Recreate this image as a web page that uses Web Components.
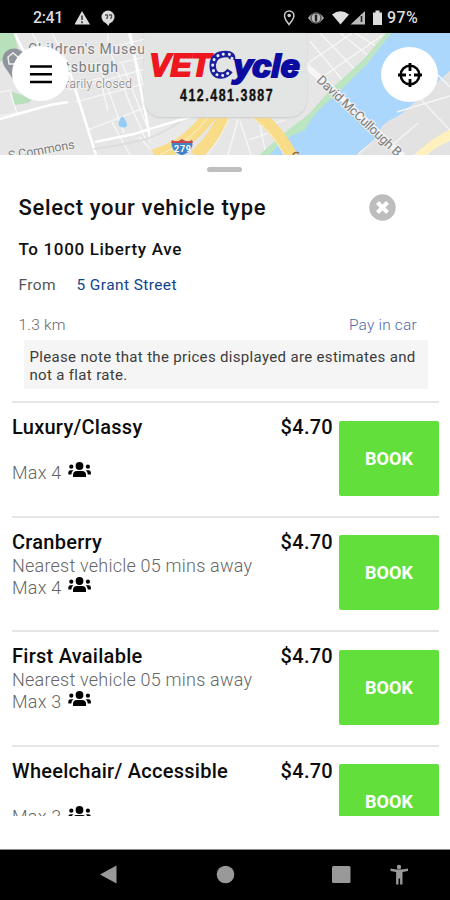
<!DOCTYPE html>
<html lang="en">
<head>
<meta charset="utf-8">
<title>VETCycle</title>
<style>
html,body{margin:0;height:100%;background:#fff}
body{font-family:Roboto,"Liberation Sans",sans-serif;overflow:hidden}
</style>
</head>
<body>
<ride-app></ride-app>
<script>
const define=(name,html)=>customElements.define(name,class extends HTMLElement{
  constructor(){super();this.attachShadow({mode:'open'}).innerHTML=html}
});

define('status-bar',`<style>
:host{display:flex;height:33px;background:#000;color:#ddd;box-sizing:border-box;padding:2px 31px 0 33px;align-items:center;justify-content:space-between;font:500 16px Roboto,sans-serif}
div{display:flex;align-items:center}
svg{display:block}
.t{letter-spacing:-.4px;width:42px}
.p{letter-spacing:.4px;width:32px}
</style>
<div><span class="t">2:41</span>
<svg width="42" height="18" viewBox="0 0 42 18"><path d="M7 2L15 15.500H-.5Z" fill="#ddd"/><path d="M7 6.500v4.500M7 12.300v2" stroke="#333" stroke-width="1.500"/><circle cx="33" cy="8" r="6.500" fill="#ddd"/><path d="M30 13l3.500 4 2-5z" fill="#ddd"/><path d="M30 6h2.500v2.200l-1 1.700M34 6h2.500v2.200l-1 1.700" fill="none" stroke="#555" stroke-width="1.400"/></svg></div>
<div>
<svg width="104" height="18" viewBox="0 0 104 18"><path d="M6 15.500C3.500 12.300 1.500 9.500 1.500 6.700a4.700 4.700 0 0 1 9.400 0C10.900 9.500 8.500 12.500 6 15.500Z" fill="none" stroke="#ccc" stroke-width="1.500"/><circle cx="6.200" cy="6.500" r="1.800" fill="#ccc"/><path d="M25 9q8-11 16 0q-8 11-16 0Z" fill="#aaa"/><circle cx="33" cy="9" r="5" fill="#bbb" stroke="#333"/><rect x="31.800" y="5.500" width="2.400" height="7" rx="1" fill="#222"/><path d="M49 5.500q8.500-6.500 17 0L57.500 15.500Z" fill="#e0e0e0"/><path d="M67.500 15.500L82 2v13.500Z" fill="#bbb"/><path d="M78.500 7v6" stroke="#222" stroke-width="1.600"/><path d="M90 3.500h2.500v-2h4v2H99v12.500h-9Z" fill="#ddd"/></svg>
<span class="p">97%</span></div>`);

define('city-map',`<style>
:host{display:block;height:122px;overflow:hidden;background:#e6e6e6}
svg{display:block}
text{font-family:Roboto,sans-serif}
</style>
<svg width="450" height="122" viewBox="0 33 450 122">
<rect y="33" width="450" height="122" fill="#e6e6e6"/>
<path d="M0 33H14L18 49 0 62ZM12 92L34 98 28 103 14 105Z" fill="#b8e0bb"/>
<g fill="none" stroke="#fff" stroke-width="1.200" opacity=".75">
<path d="M32 33L48 60M52 33L66 60M0 116L42 108M108 33V46L130 104L146 140M86 82L100 78 108 111M98 62L124 133M122 63L146 124M128 33L145 90M68 90L132 73M75 102L144 84M88 130L144 108M112 47L145 39M119 63L145 57M122 75L147 69M0 92L12 90M10 92L18 116M112 122L130 155M139 137L156 155M228 155L238 119M251 155L240 121M266 155L258 115M262 127L285 120M249 140L274 131M310 155L326 137L316 119M305 120L314 155M316 138L354 125M335 144L370 120"/>
<path d="M305 65L352 33M315 82L383 35M333 91L371 58M310 41L349 88M320 33L365 80M340 33L384 68M355 33L395 58M384 140L450 90M389 147L450 115M417 92L450 129M433 80L450 99M359 153L395 125M402 155L430 125"/></g>
<path d="M15 34L22 48 47 80M66 60L96 155M130 33L153 153M0 119L50 105 68 102M95 142L134 134 193 116" fill="none" stroke="#fff" stroke-width="2.500"/>
<path d="M150 130L198 117H218L174 155H150Z" fill="#e9e9e9"/>
<path d="M180 122Q158 136 143 140 118 146 94 149" stroke="#ddd" stroke-width="2" fill="none"/>
<path d="M391 33H450V71L418 99Q407 110 397 117 381 122 377 137L356 155H264L294 132 307 120 336 92 366 65Z" fill="#aad7fb"/>
<path d="M386 33H391L366 65 337 94Q313 113 305 130L285 139 269 155H259L288 130 309 114 330 90 363 60Z" fill="#bce5c1"/>
<path d="M377 137Q382 121 397 118L450 72V155H359Z" fill="#e2e2e2"/>
<path d="M409 87L450 130M397 112L450 96M389 148L418 123M438 75L450 87" stroke="#f5f5f5" stroke-width="1.500"/>
<path d="M414 155Q436 135 450 130V141Q437 146 427 155Z" fill="#fff1bd"/>
<g fill="none" stroke="#f9dc88"><path d="M154 156Q180 148 198 129L212 113" stroke-width="13"/><path d="M195 156Q215 138 224 115" stroke-width="12"/><path d="M255 112Q278 130 293 158" stroke-width="12"/></g>
<path d="M160 155Q194 139 208 117M207 155Q223 135 229 117M250 116Q272 130 284 155" stroke="#fff" stroke-width="1" fill="none" opacity=".6"/>
<path d="M305 65L326 83 403 156" stroke="#f7f7f7" stroke-width="6" fill="none"/>
<path d="M122 116q-5 7-3 10 5 3 8 0 0-5-5-10Z" fill="#91cdf5"/>
<circle cx="14" cy="60" r="11.500" fill="#90959d"/><path d="M5 67L14 81 18 69Z" fill="#90959d"/>
<path d="M8 57l5-4 5 4v7H9z" fill="none" stroke="#eee" stroke-width="1.500"/>
<g fill="#7c7c7c" stroke="#f0f0f0" stroke-width="2" paint-order="stroke">
<text x="28" y="54" font-size="14" textLength="117">Children's Museu</text>
<text x="27" y="72" font-size="14" textLength="91">of Pittsburgh</text>
<text x="27" y="88" font-size="12" font-weight="300" textLength="105">Temporarily closed</text>
<text x="9" y="160" font-size="12.500" textLength="67" transform="rotate(-10 9 160)">S Commons</text>
<text x="316" y="81" font-size="13" textLength="111" transform="rotate(43.500 316 81)">David McCullough B</text>
</g>
<path d="M293 158q-1-7 6-5" fill="none" stroke="#8d6750" stroke-width="1.500"/>
<path d="M172 140q5 3 10-1 5 4 10 1 4 10-10 16-14-6-10-16Z" fill="#4183c4" stroke="#eee" stroke-width=".7"/>
<path d="M172 140q5 3 10-1 5 4 10 1l1 3H171Z" fill="#cd4444"/>
<text x="182.500" y="151.500" font-size="9" font-weight="700" fill="#fff" text-anchor="middle" textLength="17">279</text>
</svg>`);

define('brand-badge',`<style>
:host{display:block;width:163px;height:84px;border-radius:0 0 18px 18px;background:#e2e5e4;box-shadow:0 1px 2px #ccc}
svg{display:block}
text{font-family:"Liberation Sans",Arial,sans-serif;font-weight:700}
</style>
<svg width="163" height="84" viewBox="144 33 163 84">
<text transform="translate(149.500 76.300)" font-size="31" font-style="italic" fill="#ee171f" stroke="#ee171f" stroke-width="2" textLength="61" lengthAdjust="spacingAndGlyphs">VET</text>
<path d="M232 59.500Q233 54 226 54 214 54 212.800 64 212 75.500 221 75.500 226.500 75.500 230 70.500" fill="none" stroke="#1a1f9c" stroke-width="6.500"/>
<path d="M232 58.500Q233 54 226 54 214 54 212.800 64 212 75.500 221 75.500 226.500 75.500 229 72" fill="none" stroke="#e8ebfa" stroke-width="3" stroke-linecap="round" stroke-dasharray=".1 5.500"/>
<text transform="translate(233.500 76.500)" font-size="32" font-style="italic" fill="#0c0ca0" stroke="#0c0ca0" stroke-width="2.200" textLength="66" lengthAdjust="spacingAndGlyphs">ycle</text>
<text transform="translate(180 101) scale(.73 1)" font-size="17" fill="#111" stroke="#111" stroke-width=".4" textLength="127">412.481.3887</text>
</svg>`);

define('round-button',`<style>
:host{display:grid;place-items:center;width:57px;height:55px;border-radius:50%;background:#fff}
::slotted(svg){display:block}
</style><slot></slot>`);

define('map-header',`<style>
:host{display:block;position:relative;height:122px}
round-button,brand-badge{position:absolute}
.menu{left:12px;top:13px}.aim{left:381px;top:14px}brand-badge{left:144px;top:0}
</style><city-map></city-map><brand-badge></brand-badge>
<round-button class="menu"><svg width="22" height="20"><path d="M0 2.500H22M0 10.200H22M0 18H22" stroke="#000" stroke-width="2.600"/></svg></round-button>
<round-button class="aim"><svg width="26" height="26" viewBox="0 0 26 26"><circle cx="13" cy="13" r="9.300" fill="none" stroke="#000" stroke-width="2.500"/><path d="M13 1v8M13 17v8M1 13h8M17 13h8" stroke="#000" stroke-width="2.800"/><circle cx="13" cy="13" r="1.100"/></svg></round-button>`);

define('trip-summary',`<style>
:host{display:block;height:246px;box-sizing:border-box;padding:12px 19px 0 18.500px;color:#111}
.grip{width:35px;height:5.500px;border-radius:3px;background:#bebebe;margin:-.5px auto 0}
.row{display:flex;justify-content:space-between;align-items:center}
h1{margin:0;font:500 22px/28px Roboto,sans-serif;letter-spacing:.64px}
.head{margin-top:22px;height:28px}
.head svg{margin-right:35px;margin-top:-2px}
h2{font:500 17px/22px Roboto,sans-serif;letter-spacing:.65px;margin:16px 0 0}
.from{display:flex;margin-top:15px;font-size:15.500px;line-height:20px;letter-spacing:.4px;color:#555}
.from span{width:58px}.from b{font-weight:400;color:#12438f}
.meta{margin-top:20px;font:300 15.500px/20px Roboto,sans-serif;color:#666;letter-spacing:.2px}
.pay{color:#5368a7;margin-right:14px}
.note{margin:5px 3px 0 5px;height:49px;box-sizing:border-box;background:#f5f5f5;padding:7.500px 0 0 6px;font-size:15px;line-height:18px;letter-spacing:.33px;color:#3c3c3c;white-space:nowrap}
</style>
<div class="grip"></div>
<div class="row head"><h1>Select your vehicle type</h1><svg width="27" height="27" viewBox="0 0 27 27"><circle cx="13.500" cy="13.500" r="13.200" fill="#bdbdbd"/><path d="M8.500 8.500l10 10M18.500 8.500l-10 10" stroke="#fff" stroke-width="4.200"/></svg></div>
<h2>To 1000 Liberty Ave</h2>
<div class="from"><span>From</span><b>5 Grant Street</b></div>
<div class="row meta"><span>1.3 km</span><span class="pay">Pay in car</span></div>
<div class="note">Please note that the prices displayed are estimates and<br>not a flat rate.</div>`);

define('vehicle-option',`<style>
:host{display:grid;grid-template-columns:1fr auto 100px;column-gap:6px;height:114.500px;box-sizing:border-box;border-top:2px solid #e5e5e5}
.info{display:grid;grid-template-rows:25px 22px 22px;padding-top:12px;white-space:nowrap}
.name,.price{font:500 20px/24px Roboto,sans-serif;letter-spacing:.27px;color:#0c0c0c}
.price{padding-top:12px}
.eta,.max{font:300 18px/22px Roboto,sans-serif;letter-spacing:.22px;color:#666}
.max{display:flex}
svg{margin:0 0 0 7px}
.book{height:75px;margin-top:17.500px;border-radius:2px;background:#62df3b;color:#fff;display:grid;place-items:center;font:700 18px/22px Roboto,sans-serif;padding-top:1px;box-sizing:border-box}
</style>
<div class="info"><div class="name"><slot></slot></div><div class="eta"><slot name="eta"></slot></div>
<div class="max"><slot name="max"></slot><svg width="24" height="17" viewBox="0 0 24 17"><circle cx="11.500" cy="4" r="3.900"/><path d="M5 15V13Q5 9 9 9H14Q18 9 18 13V15Z"/><circle cx="3.300" cy="4.700" r="2.100"/><circle cx="19.900" cy="4.700" r="2.100"/><path d="M.3 12.500V10.500Q.5 8.300 2.500 8.300H5.500Q3.500 9.600 3.300 12.500ZM22.900 12.500V10.500Q22.700 8.300 20.700 8.300H17.700Q19.600 9.600 19.800 12.500Z"/></svg></div></div>
<div class="price"><slot name="price"></slot></div><div class="book">BOOK</div>`);

define('nav-bar',`<style>
:host{display:block;height:51px;background:#000;border-top:1px solid #888;box-sizing:border-box}
svg{display:block}
</style><svg width="450" height="50" viewBox="0 850 450 50" fill="#999"><path d="M100 874.500L116.500 865.500V883.500Z"/><circle cx="225.500" cy="874.500" r="8.800"/><rect x="332" y="866" width="18.500" height="17" rx="1.500"/><circle cx="399" cy="867" r="2.200"/><path d="M390.500 868.500q8.500 2 17.500 0v2.500l-5.500 1v12.500h-2.400v-6h-1.600v6h-2.400V872l-5.600-1Z"/></svg>`);

define('ride-app',`<style>
:host{display:flex;flex-direction:column;width:450px;height:900px;background:#fff}
.list{flex:none;height:415px;overflow:hidden;margin:0 11px 0 12px}
nav-bar{margin-top:auto}
</style>
<status-bar></status-bar><map-header></map-header><trip-summary></trip-summary>
<div class="list">
<vehicle-option>Luxury/Classy<span slot="price">$4.70</span><span slot="max">Max 4</span></vehicle-option>
<vehicle-option>Cranberry<span slot="price">$4.70</span><span slot="eta">Nearest vehicle 05 mins away</span><span slot="max">Max 4</span></vehicle-option>
<vehicle-option>First Available<span slot="price">$4.70</span><span slot="eta">Nearest vehicle 05 mins away</span><span slot="max">Max 3</span></vehicle-option>
<vehicle-option>Wheelchair/ Accessible<span slot="price">$4.70</span><span slot="max">Max 3</span></vehicle-option>
</div><nav-bar></nav-bar>`);
</script>
</body>
</html>
